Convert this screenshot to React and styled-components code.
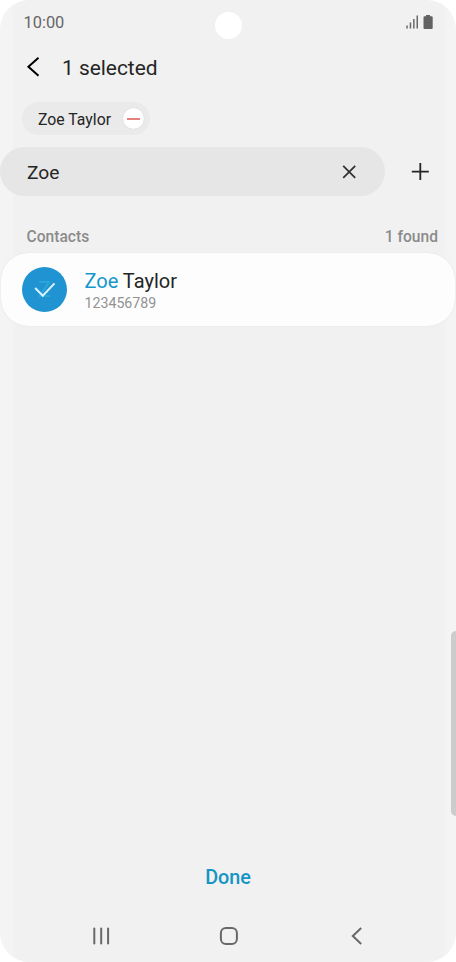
import React, { useState } from "react";
import styled, { createGlobalStyle } from "styled-components";

const GlobalStyle = createGlobalStyle`
  * { box-sizing: border-box; }
  body { margin: 0; background: #fff; }
  button, input { font: inherit; color: inherit; border: 0; padding: 0; background: none; outline: none; }
`;

const Screen = styled.div`
  width: 456px;
  height: 962px;
  display: flex; flex-direction: column;
  position: relative;
  overflow: hidden;
  border-radius: 29px;
  background: linear-gradient(90deg, #f4f4f4 11px, #f1f1f1 15px, #f1f1f1 443px, #f4f4f4 447px);
  font-family: Roboto, sans-serif;
  color: #252525;
`;

const StatusBar = styled.div`
  height: 44px;
  display: flex; justify-content: space-between; align-items: center;
  padding: 0 23px 0 23.5px;
  font-size: 16.4px; color: #666;
`;

const StatusIcons = styled.div`
  display: flex; align-items: center; gap: 5px;
  svg { display: block; }
`;

const Camera = styled.div`
  position: absolute; top: 12px; left: 215px;
  width: 27px; height: 27px; border-radius: 50%;
  background: #fff;
`;

const Header = styled.header`
  height: 48px;
  display: flex; align-items: center; gap: 17px;
  padding: 0 0 2px 21px;
`;

const Title = styled.h1`
  margin: 0;
  padding-top: 2px;
  font-size: 20.9px; font-weight: 400; line-height: 26px;
`;

const IconButton = styled.button`
  width: ${({ $size }) => $size}px;
  height: ${({ $size }) => $size}px;
  flex: none;
  display: grid; place-items: center;
  cursor: pointer;
  svg { display: block; }
`;

const Chip = styled.div`
  width: 128px; height: 33px;
  display: flex; align-items: center; justify-content: space-between;
  margin: 10px 0 12px 22px;
  padding: 0 6px 0 16px;
  border-radius: 17px;
  background: #eaeaea;
  font-size: 15.8px;
  span { padding-top: 1px; }
`;

const RemoveButton = styled(IconButton)`
  border-radius: 50%;
  background: #fff;
  box-shadow: 0 0 1px rgba(0, 0, 0, .2);
`;

const SearchRow = styled.div`
  display: flex; align-items: center; gap: 24px;
`;

const SearchField = styled.label`
  width: 385px; height: 49px;
  display: flex; align-items: center;
  padding: 0 25px 0 27px;
  border-radius: 25px;
  background: #e6e6e6;
`;

const SearchInput = styled.input`
  flex: 1; min-width: 0;
  padding-top: 2px;
  font-size: 19.2px;
`;

const ListHeader = styled.div`
  display: flex; justify-content: space-between;
  margin: 31px 18px 6px 26.5px;
  font-size: 15.6px; font-weight: 500; line-height: 20px;
  color: #8b8b8b;
`;

const ContactCard = styled.div`
  height: 73px;
  display: flex; align-items: center; gap: 17.5px;
  margin: 0 1px;
  padding-left: 21px;
  border-radius: 27px;
  background: #fdfdfd;
  box-shadow: 0 0 1px rgba(0, 0, 0, .16);
`;

const Avatar = styled.div`
  width: 45px; height: 45px; border-radius: 50%;
  display: grid; place-items: center;
  background: #2094d2;
  color: #2ba5da;
  font-size: 22px;
  > * { grid-area: 1 / 1; }
`;

const ContactInfo = styled.div`
  padding-top: 3px;
`;

const Name = styled.div`
  font-size: 20px; line-height: 24px;
  span { color: #1497cb; }
`;

const Phone = styled.div`
  font-size: 14.2px; line-height: 20px;
  color: #929292;
`;

const EdgeHandle = styled.div`
  position: absolute; top: 631px; right: -5px;
  width: 10px; height: 185px; border-radius: 5px;
  background: #cdcccd;
`;

const DoneButton = styled.button`
  align-self: center;
  margin-top: auto;
  padding-top: 2px;
  height: 40px; width: 96px;
  font-size: 19.8px; font-weight: 500;
  color: #1595c5;
  cursor: pointer;
`;

const NavBar = styled.nav`
  height: 66px;
  display: flex; justify-content: space-between; align-items: center;
  padding: 14px 87px 0 89px;
`;

const strokeProps = { fill: "none", stroke: "currentColor" };

const Signal = () => (
  <svg width="12" height="14" viewBox="0 0 12 14" fill="#696969">
    <rect x="0.3" y="10.5" width="1.5" height="3" />
    <rect x="3.7" y="7.5" width="1.5" height="6" />
    <rect x="7.1" y="4" width="1.5" height="9.5" />
    <rect x="10.5" y="0.5" width="1.5" height="13" />
  </svg>
);

const Battery = () => (
  <svg width="10" height="14" viewBox="0 0 10 14" fill="#626262">
    <path d="M3 0h4v1.3h1.5Q9.7 1.3 9.7 2.3V13Q9.7 14 8.5 14h-7Q.5 14 .5 13V2.3Q.5 1.3 1.5 1.3H3z" />
  </svg>
);

export default function App() {
  const [query, setQuery] = useState("Zoe");

  return (
    <>
      <GlobalStyle />
      <Screen>
        <StatusBar>
          <span>10:00</span>
          <StatusIcons>
            <Signal />
            <Battery />
          </StatusIcons>
        </StatusBar>
        <Camera />

        <Header>
          <IconButton $size={24} aria-label="Back">
            <svg width="14" height="20" viewBox="0 0 14 20" {...strokeProps} stroke="#000" strokeWidth="2">
              <path d="M12.5 .8 2.4 9.8 12.5 18.8" />
            </svg>
          </IconButton>
          <Title>1 selected</Title>
        </Header>

        <Chip>
          <span>Zoe Taylor</span>
          <RemoveButton $size={21} aria-label="Remove Zoe Taylor">
            <svg width="13" height="2" viewBox="0 0 13 2">
              <path d="M0 1h13" stroke="#e88080" strokeWidth="2" />
            </svg>
          </RemoveButton>
        </Chip>

        <SearchRow>
          <SearchField>
            <SearchInput aria-label="Search" value={query} onChange={(e) => setQuery(e.target.value)} />
            <IconButton $size={22} aria-label="Clear" onClick={() => setQuery("")}>
              <svg width="14" height="14" viewBox="0 0 14 14" {...strokeProps} stroke="#333" strokeWidth="1.8">
                <path d="M1.2 .8l12 12M13.2 .8l-12 12" />
              </svg>
            </IconButton>
          </SearchField>
          <IconButton $size={22} aria-label="Add">
            <svg width="18" height="18" viewBox="0 0 18 18" {...strokeProps} strokeWidth="1.8">
              <path d="M.8 8.6h17M9.3 .1v17" />
            </svg>
          </IconButton>
        </SearchRow>

        <ListHeader>
          <span>Contacts</span>
          <span>1 found</span>
        </ListHeader>
        <ContactCard>
          <Avatar>
            <span>Z</span>
            <svg width="22" height="16" viewBox="0 0 22 16" {...strokeProps} stroke="#d9f3fc" strokeWidth="2">
              <path d="m1.2 6 7.6 7.7L20.5 1.4" />
            </svg>
          </Avatar>
          <ContactInfo>
            <Name><span>Zoe</span> Taylor</Name>
            <Phone>123456789</Phone>
          </ContactInfo>
        </ContactCard>

        <EdgeHandle />

        <DoneButton>Done</DoneButton>
        <NavBar>
          <IconButton $size={24} aria-label="Recent apps">
            <svg width="18" height="18" viewBox="0 0 18 18" {...strokeProps} stroke="#686868" strokeWidth="2" strokeLinecap="round">
              <path d="M2.3 1.5v15M9.2 1.5v15M16.1 1.5v15" />
            </svg>
          </IconButton>
          <IconButton $size={24} aria-label="Home">
            <svg width="20" height="20" viewBox="0 0 20 20" {...strokeProps} stroke="#686868" strokeWidth="2">
              <rect x="1.9" y="1.9" width="16" height="16" rx="5" />
            </svg>
          </IconButton>
          <IconButton $size={24} aria-label="Back">
            <svg width="12" height="18" viewBox="0 0 12 18" {...strokeProps} stroke="#686868" strokeWidth="2">
              <path d="M10.2 1 1.8 9l8.4 8" />
            </svg>
          </IconButton>
        </NavBar>
      </Screen>
    </>
  );
}
